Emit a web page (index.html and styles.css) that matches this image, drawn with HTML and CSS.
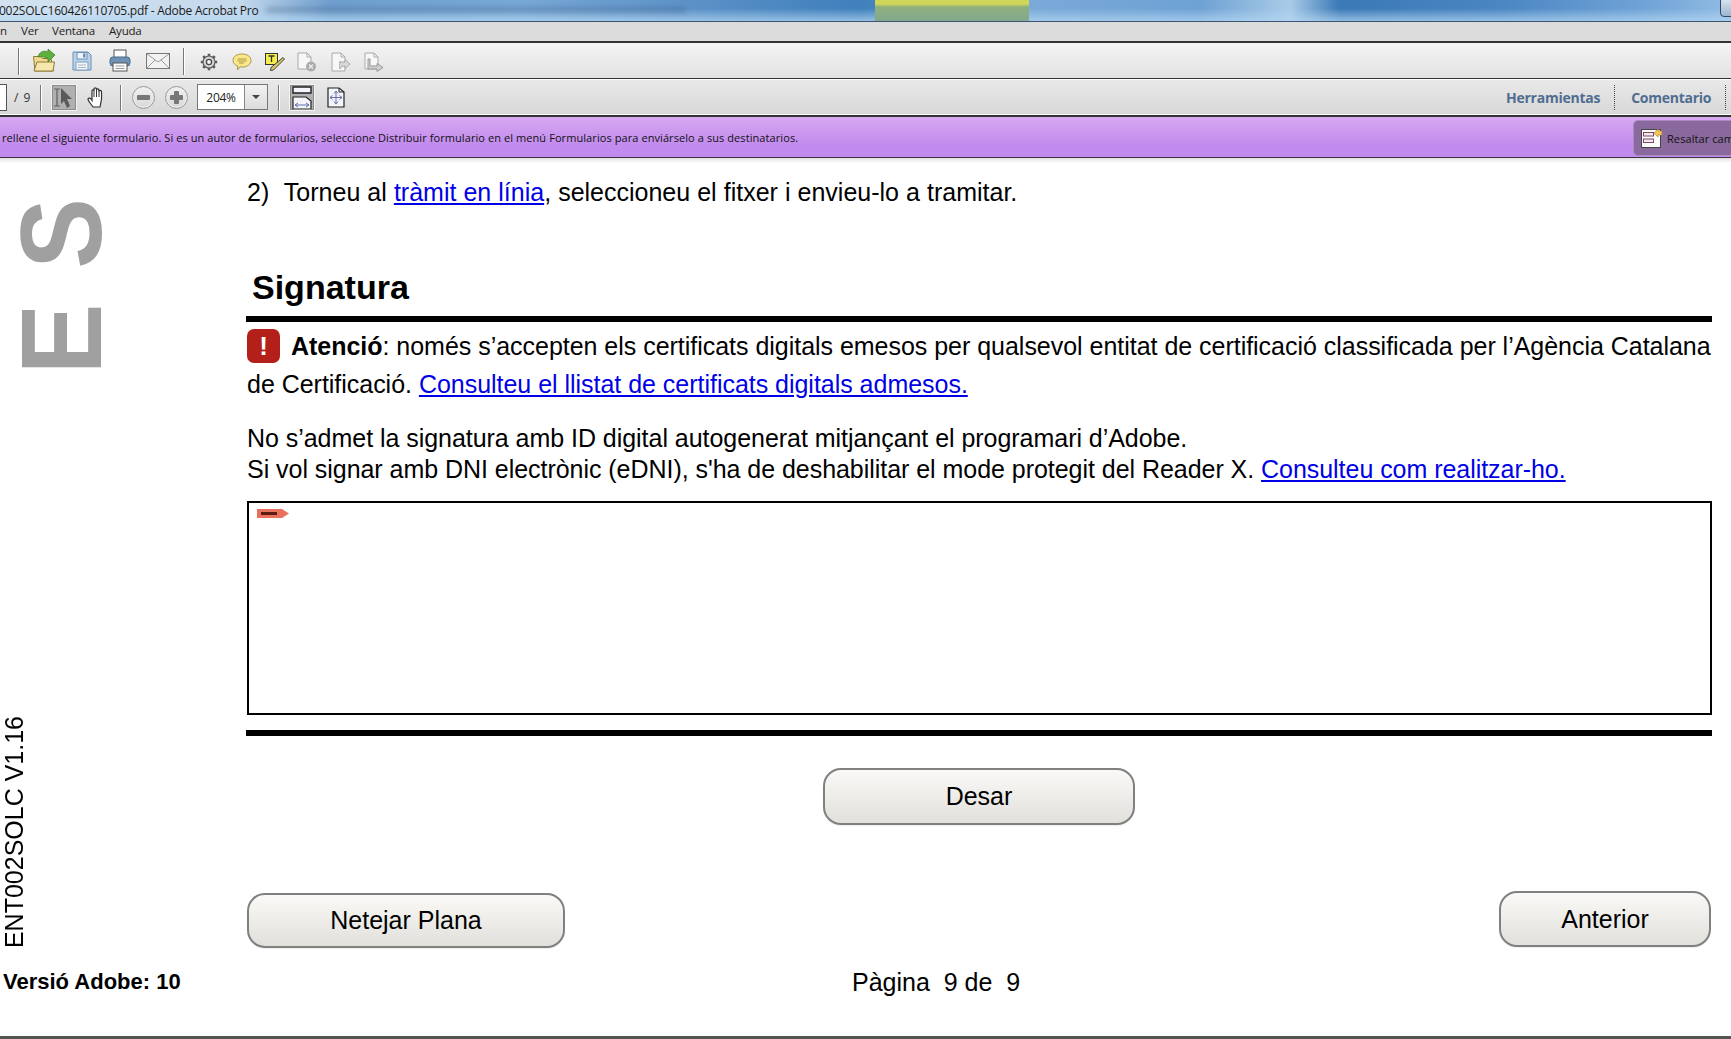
FILE: index.html
```html
<!DOCTYPE html>
<html lang="ca">
<head>
<meta charset="utf-8">
<title>Adobe Acrobat Pro</title>
<link rel="stylesheet" href="styles.css">
</head>
<body>
<div class="app">
  <header class="titlebar">
    <span class="title-text">002SOLC160426110705.pdf - Adobe Acrobat Pro</span>
    <span class="title-blur"></span>
    <span class="task-tab"></span>
    <span class="win-btn"></span>
  </header>
  <nav class="menubar">
    <span class="menu-n">n</span><span class="menu-ver">Ver</span><span class="menu-ventana">Ventana</span><span>Ayuda</span>
  </nav>
  <div class="toolbar tb-one">
    <i class="sep sep-a"></i>
    <svg class="ic ic-open" width="24" height="24" viewBox="0 0 24 24"><path d="M1.500 7.500h7l2 2h8.500l2.500 12.500h-18.500z" fill="#f0d98c" stroke="#8f7a38"/><path d="M2 22l3-9h17.500l-1.500 9z" fill="#f6e7ae" stroke="#8f7a38"/><path d="M6 8c1-5 6-7 10-5V0l7 6-7 7V9.500c-4-2-7-2-10-1.500z" fill="#5db03c" stroke="#3a7d26" stroke-width=".7"/></svg>
    <svg class="ic ic-save" width="20" height="20" viewBox="0 0 20 20"><path d="M1 1h15l3 3v15H1z" fill="#bcd4ea" stroke="#6b8fb4"/><rect x="5" y="1.500" width="10" height="6.500" fill="#eef4fa" stroke="#6b8fb4"/><rect x="11" y="2.500" width="2.500" height="4" fill="#6b8fb4"/><rect x="4" y="11" width="12" height="8" fill="#f2f6fa" stroke="#7f9dbd"/><path d="M6 14h8M6 16.500h8" stroke="#a5b7c8"/></svg>
    <svg class="ic ic-print" width="22" height="23" viewBox="0 0 22 23"><rect x="5" y="1" width="12" height="8" fill="#fff" stroke="#555"/><rect x="1" y="8" width="20" height="9" rx="3" fill="#6f93b7" stroke="#4a6a8a"/><rect x="4" y="14" width="14" height="8" fill="#fff" stroke="#555"/><path d="M6.500 17h9M6.500 19.500h9" stroke="#999"/></svg>
    <svg class="ic ic-mail" width="24" height="16" viewBox="0 0 24 16"><rect x=".5" y=".5" width="23" height="15" fill="#f2f2f2" stroke="#777"/><path d="M1 1l11 8 11-8M1 15l8-8M23 15l-8-8" fill="none" stroke="#9a9a9a"/></svg>
    <i class="sep sep-b"></i>
    <svg class="ic ic-gear" width="18" height="18" viewBox="0 0 18 18"><path d="M9 .8v3M9 14.200v3M.8 9h3M14.200 9h3M3.200 3.200l2 2M12.800 12.800l2 2M14.800 3.200l-2 2M5.200 12.800l-2 2" stroke="#5a5a5a" stroke-width="2.600"/><circle cx="9" cy="9" r="6" fill="#d4d4d4" stroke="#5a5a5a" stroke-width="1.100"/><circle cx="9" cy="9" r="2.600" fill="#f4f4f4" stroke="#4a4a4a" stroke-width="1.300"/></svg>
    <svg class="ic ic-comment" width="20" height="18" viewBox="0 0 20 18"><path d="M10 1c5 0 9 2.500 9 6.500S15 14 10.500 14c-1 0-1.500 0-2.500-.2L5.500 17l.3-4C3 12 1 10 1 7.500 1 3.500 5 1 10 1z" fill="#fbe88a" stroke="#a59a50"/><path d="M5.500 6h9M5.500 8h9M7 10h5" stroke="#a08f3e" stroke-width=".9"/></svg>
    <svg class="ic ic-note" width="20" height="18" viewBox="0 0 20 18"><rect x=".5" y=".5" width="12" height="11" fill="#f5ee4a" stroke="#333"/><path d="M3.500 3h6M6.500 3v6" stroke="#333" stroke-width="1.300" fill="none"/><path d="M18 4.500l1.500 1.500-11 11-3 .5.500-3z" fill="#d5c36a" stroke="#444"/></svg>
    <svg class="ic ic-doc1" width="20" height="20" viewBox="0 0 20 20"><path d="M1 1h9l4 4v12H1z" fill="#f7f7f7" stroke="#aaa"/><path d="M10 1v4h4" fill="none" stroke="#aaa"/><circle cx="14" cy="14.500" r="5" fill="#aaa"/><path d="M12 12.500l4 4m0-4l-4 4" stroke="#eee" stroke-width="1.300"/></svg>
    <svg class="ic ic-doc2" width="20" height="20" viewBox="0 0 20 20"><path d="M1 1h9l4 4v14H1z" fill="#f7f7f7" stroke="#aaa"/><path d="M10 1v4h4" fill="none" stroke="#aaa"/><path d="M8 10h6V7.500l5 4.500-5 4.500V14c-3 0-4 1-5 3-1-3 0-7 .5-7z" fill="#d8d8d8" stroke="#aaa"/></svg>
    <svg class="ic ic-doc3" width="20" height="20" viewBox="0 0 20 20"><path d="M1 1h9l4 4v12H1z" fill="#f7f7f7" stroke="#aaa"/><path d="M10 1v4h4" fill="none" stroke="#aaa"/><path d="M6 7v7h7v-2.500l6 4-6 4V17H4V7z" fill="#cfcfcf" stroke="#999"/></svg>
  </div>
  <div class="toolbar tb-two">
    <span class="page-input"></span>
    <span class="page-total">/ 9</span>
    <i class="sep sep-c"></i>
    <span class="tool-on tool-select">
      <svg width="24" height="22" viewBox="0 0 24 22"><path d="M2 2h6M2 19h6M5 2v17" stroke="#5f5f5f" stroke-width="1.200" fill="none"/><path d="M9 1l11 11h-5l3 7-3 2-3-7-3 3z" fill="#5a5a5a"/></svg>
    </span>
    <svg class="ic ic-hand" width="20" height="22" viewBox="0 0 20 22"><path d="M6 21c-2-3-5-6-5-8 0-1 2-1.500 3 0l1 1.500V5c0-1.500 2-1.500 2 0V3c0-1.500 2.500-1.500 2.500 0v1c0-1.500 2.500-1.500 2.500 0v1.500c0-1.500 2.500-1.500 2.500 0 0 5 .5 7.500-.5 10.500l-1 5z" fill="#fff" stroke="#333" stroke-width="1.200"/><path d="M7 5v6M9.500 3v8M12 4v7" stroke="#333"/></svg>
    <i class="sep sep-d"></i>
    <span class="round-btn btn-minus"><b class="bar-h"></b></span>
    <span class="round-btn btn-plus"><b class="bar-h"></b><b class="bar-v"></b></span>
    <span class="zoom-box"><span class="zoom-val">204%</span><span class="zoom-arrow"><i></i></span></span>
    <i class="sep sep-e"></i>
    <span class="tool-on tool-fit">
      <svg width="20" height="24" viewBox="0 0 20 24"><path d="M1 1h18v6H1z" fill="#f4f4fb" stroke="#222" stroke-width="1.400"/><path d="M1 11h13l5 4v8H1z" fill="#f4f4fb" stroke="#222" stroke-width="1.200"/><path d="M3 19h14M3 19l3-2m-3 2l3 2M17 19l-3-2m3 2l-3 2" stroke="#6670a8" fill="none"/></svg>
    </span>
    <svg class="ic ic-fit" width="18" height="21" viewBox="0 0 18 21"><path d="M1 1h11l5 4v15H1z" fill="#f4f4fb" stroke="#222" stroke-width="1.200"/><path d="M12 1v4h5" fill="none" stroke="#222"/><path d="M9 4v13M3 10.500h12M9 4L7 6.500M9 4l2 2.500M9 17l-2-2.500M9 17l2-2.500M3 10.500L5.500 8.500M3 10.500l2.500 2M15 10.500l-2.500-2M15 10.500l-2.500 2" stroke="#6670a8" fill="none"/></svg>
    <span class="nav-tabs"><a class="nav-tab">Herramientas</a><a class="nav-tab">Comentario</a><i class="nav-end"></i></span>
  </div>
  <div class="formbar">
    <span class="form-msg">rellene el siguiente formulario. Si es un autor de formularios, seleccione Distribuir formulario en el menú Formularios para enviárselo a sus destinatarios.</span>
    <span class="form-btn">
      <svg width="21" height="20" viewBox="0 0 21 20"><rect x=".5" y="1.500" width="19" height="18" fill="#fbfbfb" stroke="#444"/><rect x="2.500" y="4.500" width="10" height="3.500" fill="#f2e7ef" stroke="#7c4a65"/><rect x="2.500" y="11" width="10" height="3.500" fill="#f2e7ef" stroke="#7c4a65"/><path d="M13 5l4-4v2h4v4h-4v2z" fill="#f6c659" stroke="#b8862a" stroke-width=".7"/></svg>
      <span>Resaltar cam</span>
    </span>
  </div>
  <main class="doc">
    <div class="doc-body">
      <aside class="side">
        <div class="mark">ES</div>
        <div class="code">ENT002SOLC V1.16</div>
      </aside>
      <section class="content">
        <p class="step"><span class="step-num">2)</span>&nbsp; Torneu al <a href="#">tràmit en línia</a>, seleccioneu el fitxer i envieu-lo a tramitar.</p>
        <h1 class="head">Signatura</h1>
        <div class="rule"></div>
        <p class="notice"><span class="alert">!</span><strong>Atenció</strong>: només s’accepten els certificats digitals emesos per qualsevol entitat de certificació classificada per l’Agència Catalana<br>de Certificació. <a href="#">Consulteu el llistat de certificats digitals admesos.</a></p>
        <p class="info">No s’admet la signatura amb ID digital autogenerat mitjançant el programari d’Adobe.<br>Si vol signar amb DNI electrònic (eDNI), s'ha de deshabilitar el mode protegit del Reader X. <a href="#">Consulteu com realitzar-ho.</a></p>
        <div class="sign-box"><span class="sign-tag"><i></i></span></div>
        <div class="rule rule-low"></div>
        <div class="row-save"><button class="btn btn-save">Desar</button></div>
        <div class="row-nav">
          <button class="btn btn-clear">Netejar Plana</button>
          <button class="btn btn-prev">Anterior</button>
        </div>
      </section>
    </div>
    <footer class="doc-foot">
      <strong class="foot-ver">Versió Adobe: 10</strong>
      <span class="foot-page">Pàgina&nbsp; 9 de&nbsp; 9</span>
    </footer>
  </main>
  <div class="bottom-line"></div>
</div>
</body>
</html>
```

FILE: styles.css
```css
* { box-sizing: border-box; }
html, body { margin: 0; padding: 0; background: #fff; }
.app { width: 1731px; height: 1039px; overflow: hidden; display: flex; flex-direction: column; font-family: "Liberation Sans", Arial, sans-serif; color: #000; }

.titlebar { height: 22px; flex: none; position: relative; display: flex; align-items: center; overflow: hidden; border-bottom: 1px solid #3d5670;
  background:
    linear-gradient(180deg, rgba(170,210,240,0) 0 40%, rgba(180,215,242,.7) 100%),
    linear-gradient(90deg, #d2e2f0 0, #c4d9ec 240px, #6f9fce 330px, #78a8d6 520px, #5a90c6 700px, #3f7fbc 860px, #7cabd9 1000px, #6ea1d4 1200px, #a9cbe8 1290px, #3a78b6 1340px, #4b86c2 1500px, #6fa2d6 1640px, #8db9e2 1720px);
}
.title-text { font: 12px "Open Sans", sans-serif; letter-spacing: -.25px; margin-left: -1px; color: #1a1a1a; white-space: nowrap; position: relative; }
.title-blur { position: absolute; left: 266px; top: 7px; width: 420px; height: 6px; background: rgba(60,90,130,.3); filter: blur(2.500px); }
.task-tab { position: absolute; left: 875px; top: 0; width: 154px; height: 21px; background: linear-gradient(180deg, #cfd65a 0 4px, #8fb07c 7px, #82a98d 100%); filter: blur(.6px); }
.win-btn { position: absolute; left: 1720px; top: -3px; width: 20px; height: 20px; border: 1px solid #2b4a6e; border-radius: 4px; background: linear-gradient(#dfe9f2, #9db4cc); }

.menubar { height: 21px; flex: none; display: flex; align-items: center; background: #dcdcdc; border-bottom: 2px solid #333; font: 11.500px "Open Sans", sans-serif; letter-spacing: -.2px; color: #222; white-space: nowrap; padding-bottom: 2px; }
.menu-n { width: 21px; }
.menu-ver { width: 31px; }
.menu-ventana { width: 57px; }

.toolbar { flex: none; position: relative; }
.tb-one { height: 36px; background: linear-gradient(180deg, #f4f4f4, #e2e2e2); border-bottom: 1px solid #333; }
.tb-two { height: 38px; background: linear-gradient(180deg, #e9e9e9, #d7d7d7); border-top: 1px solid #fff; border-bottom: 2px solid #333; box-shadow: inset 0 -1px 0 #fff; }
.sep { position: absolute; width: 1px; background: #777; box-shadow: 1px 0 0 #fff; }
.tb-one .sep { top: 5px; height: 27px; }
.tb-two .sep { top: 5px; height: 26px; }
.sep-a { left: 18px; }
.sep-b { left: 183px; }
.sep-c { left: 40px; }
.sep-d { left: 120px; }
.sep-e { left: 278px; }
.ic { position: absolute; display: block; overflow: visible; }
.ic-open { left: 32px; top: 6px; }
.ic-save { left: 72px; top: 8px; }
.ic-print { left: 109px; top: 6px; }
.ic-mail { left: 146px; top: 10px; }
.ic-gear { left: 200px; top: 10px; }
.ic-comment { left: 232px; top: 10px; }
.ic-note { left: 265px; top: 10px; }
.ic-doc1 { left: 297px; top: 9px; }
.ic-doc2 { left: 331px; top: 9px; }
.ic-doc3 { left: 364px; top: 9px; }
.page-input { position: absolute; left: -3px; top: 4px; width: 10px; height: 27px; background: #fff; border: 1px solid #555; }
.page-total { position: absolute; left: 14px; top: 9px; font: 12px "Open Sans", sans-serif; color: #333; word-spacing: 2px; }
.tool-on { position: absolute; top: 4px; width: 26px; height: 27px; background: #b0b0b0; border: 1px solid #f2f2f2; outline: 1px solid #8c8c8c; outline-offset: -2px; display: flex; align-items: center; justify-content: center; }
.tool-select { left: 51px; }
.tool-fit { left: 289px; }
.ic-hand { left: 87px; top: 6px; }
.round-btn { position: absolute; top: 6px; width: 23px; height: 23px; border-radius: 50%; border: 1px solid #9a9a9a; background: linear-gradient(#f1f1f1, #d8d8d8); box-shadow: 0 0 0 1px #eee inset; }
.btn-minus { left: 132px; }
.btn-plus { left: 165px; }
.bar-h { position: absolute; left: 4px; top: 8px; width: 13px; height: 5px; background: #777; border-radius: 1px; }
.bar-v { position: absolute; left: 8px; top: 4px; width: 5px; height: 13px; background: #777; border-radius: 1px; }
.zoom-box { position: absolute; left: 197px; top: 4px; width: 71px; height: 26px; background: #fff; border: 1px solid #777; display: flex; align-items: center; }
.zoom-val { flex: 1; font: 12px "Open Sans", sans-serif; letter-spacing: -.3px; text-align: center; color: #222; }
.zoom-arrow { width: 23px; height: 100%; background: linear-gradient(#f2f2f2, #dcdcdc); border-left: 1px solid #888; display: flex; align-items: center; justify-content: center; }
.zoom-arrow i { width: 0; height: 0; border: 4px solid transparent; border-top: 4px solid #444; border-bottom: 0; }
.ic-fit { left: 327px; top: 7px; }
.nav-tabs { position: absolute; left: 1506px; top: 0; height: 35px; display: flex; align-items: center; }
.nav-tab { font: 700 14px "Open Sans", sans-serif; letter-spacing: -.25px; color: #4f6d91; padding-right: 14px; margin-right: 16px; border-right: 1px dotted #444; height: 25px; line-height: 25px; }
.nav-end { width: 1px; height: 25px; border-left: 1px dotted #444; margin-left: -4px; }

.formbar { height: 41px; flex: none; position: relative; display: flex; align-items: center; background: linear-gradient(180deg, #d6a9f0, #c28bee 70%, #c08af0); border-bottom: 1px solid #3e3245; white-space: nowrap; overflow: hidden; color: #111; }
.form-msg { font: 11px "Open Sans", sans-serif; letter-spacing: .08px; margin-left: 2px; }
.form-btn { position: absolute; left: 1633px; top: 3px; width: 130px; height: 36px; background: #8a6a9e; border: 1px solid #a98bbd; border-radius: 5px 0 0 5px; display: flex; align-items: center; gap: 5px; padding-left: 7px; font: 11px "Open Sans", sans-serif; letter-spacing: .08px; color: #111; }

.doc { flex: 1; min-height: 0; display: flex; flex-direction: column; background: linear-gradient(180deg, #e0e0e0 0, #fff 5px); }
.doc-body { flex: 1; display: flex; min-height: 0; }
.side { width: 246px; flex: none; display: flex; flex-direction: column; justify-content: space-between; padding-bottom: 20px; }
.mark { writing-mode: vertical-rl; transform: rotate(180deg) scale(1, .92); font-weight: 700; font-size: 115px; line-height: 1; color: #a0a0a0; letter-spacing: 38px; align-self: flex-start; margin: -4px 0 0 4px; }
.code { writing-mode: vertical-rl; transform: rotate(180deg); font-size: 25px; line-height: 28px; align-self: flex-start; }
.content { flex: 1; margin-right: 19px; min-width: 0; font-size: 25px; }
.content p { margin: 0; }
.content a { color: #0000e6; text-decoration: underline; }
.step { line-height: 30px; padding-top: 19px; margin-left: 1px !important; word-spacing: .1px; }
.step-num { margin-right: 1px; }
.head { margin: 60px 0 0 6px; font-size: 34px; line-height: 40px; font-weight: 700; height: 49px; }
.rule { height: 6px; background: #000; }
.notice { line-height: 38px; margin: 5px 0 0 1px !important; white-space: nowrap; letter-spacing: -.025px; }
.alert { display: inline-block; overflow: hidden; width: 33px; height: 34px; border-radius: 7px; background: #b3201a; color: #fff; text-align: center; line-height: 34px; vertical-align: -8px; margin-right: 11px; font-size: 26px; font-weight: 700; }
.info { line-height: 31px; margin: 20px 0 0 1px !important; letter-spacing: -.04px; }
.sign-box { height: 214px; margin: 16px 0 0 1px; border: 2px solid #000; padding: 6px 0 0 8px; }
.sign-tag { display: block; width: 32px; height: 9px; background: #e8705c; clip-path: polygon(0 0, 78% 0, 100% 50%, 78% 100%, 0 100%); padding: 3px 4px; }
.sign-tag i { display: block; width: 16px; height: 3px; background: #5b1a12; }
.rule-low { margin-top: 15px; }
.row-save { display: flex; justify-content: center; margin-top: 32px; }
.btn { font: 25px "Liberation Sans", Arial, sans-serif; color: #000; border: 2px solid #808080; border-radius: 18px; background: linear-gradient(180deg, #faf9f7, #e2e0db); padding: 0; box-shadow: 0 1px 1px #eee; }
.btn-save { width: 312px; height: 57px; }
.row-nav { display: flex; justify-content: space-between; align-items: flex-start; margin-top: 66px; margin-left: 1px; }
.btn-clear { width: 318px; height: 55px; margin-top: 2px; }
.btn-prev { width: 212px; height: 56px; margin-right: 1px; }
.doc-foot { height: 68px; flex: none; display: flex; align-items: flex-start; line-height: 28px; }
.foot-ver { width: 852px; padding-left: 3px; font-size: 22px; }
.foot-page { font-size: 25px; }
.bottom-line { height: 3px; flex: none; background: #555; }
```
